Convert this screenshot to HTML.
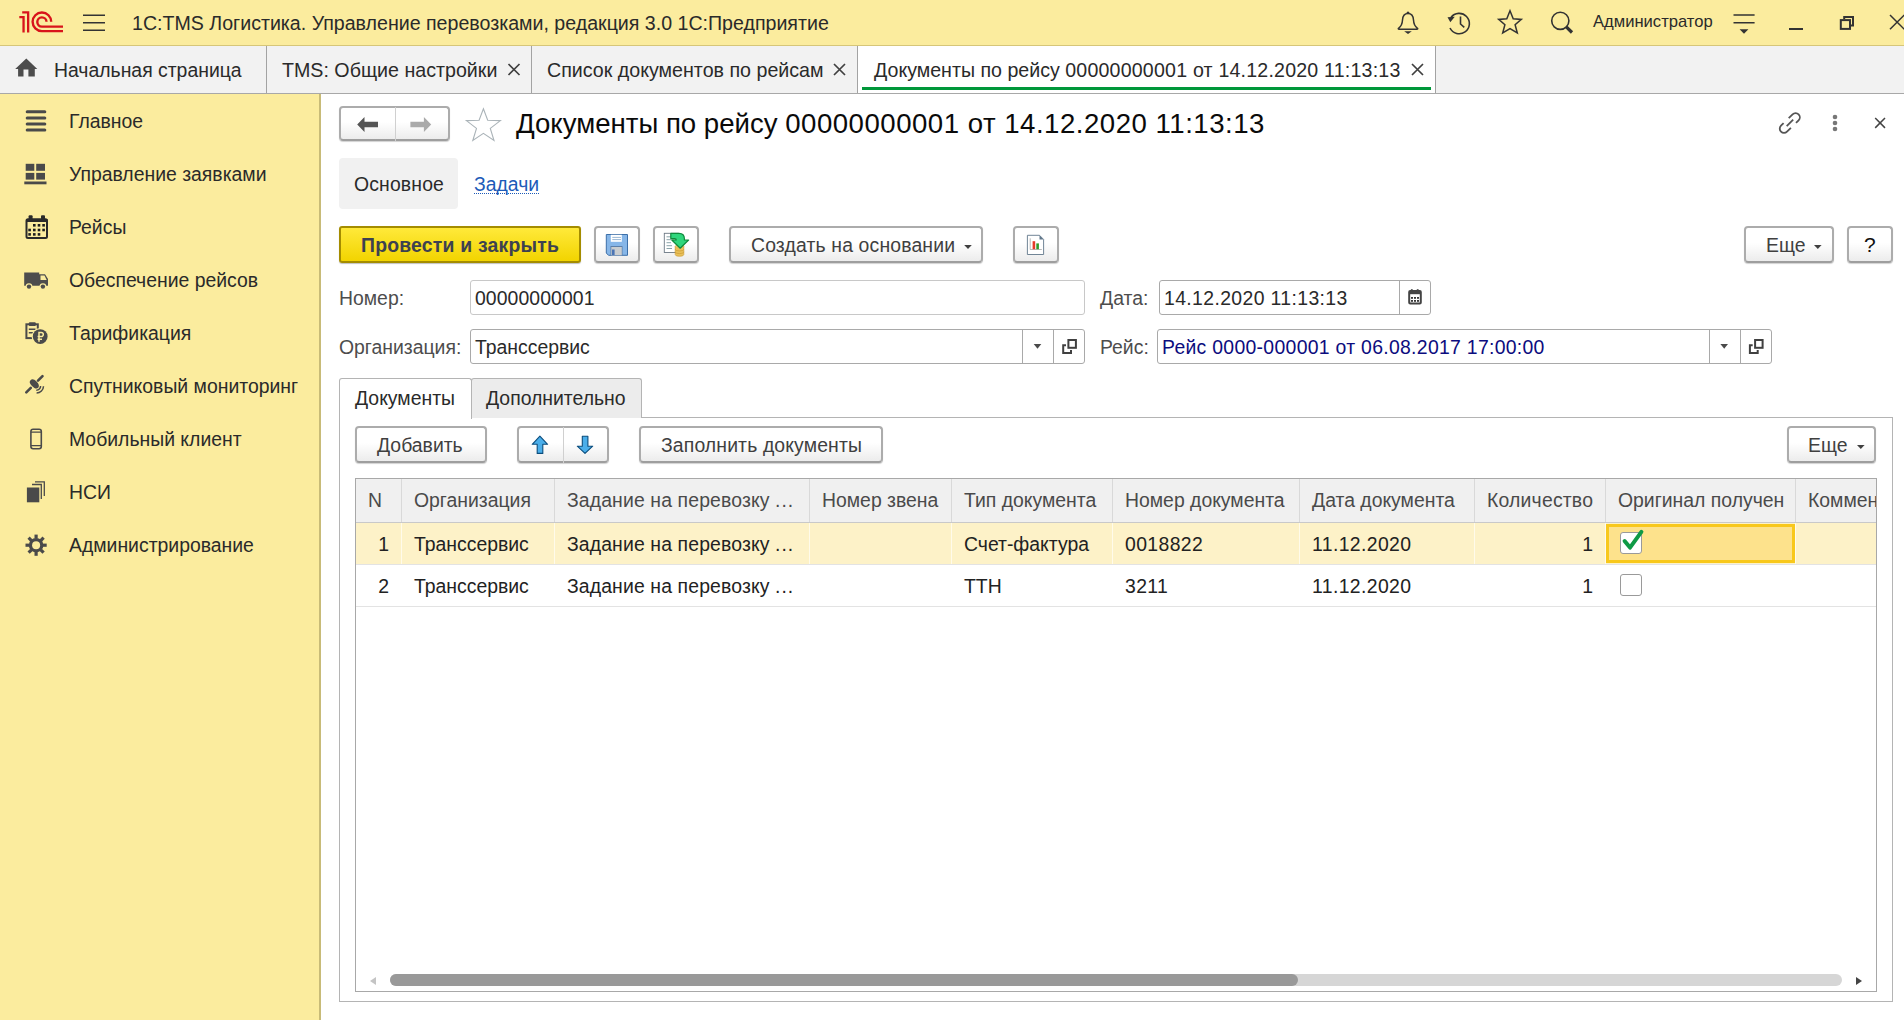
<!DOCTYPE html>
<html><head><meta charset="utf-8">
<style>
*{margin:0;padding:0;box-sizing:border-box}
html,body{width:1904px;height:1020px;overflow:hidden;background:#fff;font-family:"Liberation Sans",sans-serif;color:#2a2a2a;font-size:19.4px}
.a{position:absolute}
.t{position:absolute;white-space:nowrap;line-height:20px;height:20px}
#top{left:0;top:0;width:1904px;height:46px;background:#fbec9e;border-bottom:1px solid #d6c679}
#tabs{left:0;top:46px;width:1904px;height:48px;background:#f2f2f2;border-bottom:1px solid #a8a8a8}
#side{left:0;top:94px;width:321px;height:926px;background:#fbec9e;border-right:2px solid #c8bb78}
.sep{position:absolute;top:46px;width:1px;height:47px;background:#a3a3a3}
.btn{position:absolute;border:2px solid #acacac;border-bottom-color:#9e9e9e;border-radius:4px;background:linear-gradient(#fff 0%,#fff 45%,#ececec 100%);box-shadow:0 1px 1px rgba(0,0,0,.18)}
.fld{position:absolute;border:1px solid #a9a9a9;border-radius:3px;background:#fff}
.lbl{color:#4d4d4d}
.hd{position:absolute;top:479px;height:43px;background:#f2f2f2}
.vl{position:absolute;width:1px;background:#dcdcdc}
.dg{letter-spacing:0.38px}
</style></head><body>
<!-- top bar -->
<div id="top" class="a"></div>
<div id="tabs" class="a"></div>
<div id="side" class="a"></div>


<!-- title -->
<div class="t" style="left:132px;top:13px;font-size:19.6px">1С:TMS Логистика. Управление перевозками, редакция 3.0 1С:Предприятие</div>
<div class="t" style="left:1593px;top:12px;font-size:16.6px">Администратор</div>
<!-- tabs -->
<div class="sep" style="left:266px"></div>
<div class="sep" style="left:531px"></div>
<div class="sep" style="left:857px"></div>
<div class="a" style="left:858px;top:46px;width:577px;height:47px;background:#fff"></div>
<div class="sep" style="left:1435px"></div>
<div class="a" style="left:862px;top:87px;width:569px;height:3px;background:#00973a"></div>
<div class="t" style="left:54px;top:60px">Начальная страница</div>
<div class="t" style="left:282px;top:60px;font-size:19.65px">TMS: Общие настройки</div>
<div class="t" style="left:547px;top:60px;font-size:19.65px">Список документов по рейсам</div>
<div class="t" style="left:874px;top:60px;font-size:19.6px">Документы по рейсу <span style="letter-spacing:0.2px">00000000001 от 14.12.2020 11:13:13</span></div>
<!-- sidebar -->
<div class="t" style="left:69px;top:111px">Главное</div>
<div class="t" style="left:69px;top:164px">Управление заявками</div>
<div class="t" style="left:69px;top:217px">Рейсы</div>
<div class="t" style="left:69px;top:270px">Обеспечение рейсов</div>
<div class="t" style="left:69px;top:323px">Тарификация</div>
<div class="t" style="left:69px;top:376px">Спутниковый мониторинг</div>
<div class="t" style="left:69px;top:429px">Мобильный клиент</div>
<div class="t" style="left:69px;top:482px">НСИ</div>
<div class="t" style="left:69px;top:535px">Администрирование</div>
<!-- form header -->
<div class="btn" style="left:339px;top:106px;width:111px;height:35px"></div>
<div class="a" style="left:395px;top:107px;width:1px;height:34px;background:#d0d0d0"></div>
<div class="t" style="left:516px;top:114px;font-size:27.6px;color:#0a0a0a">Документы по рейсу <span style="letter-spacing:0.5px">00000000001 от 14.12.2020 11:13:13</span></div>
<div class="a" style="left:339px;top:158px;width:119px;height:51px;background:#f1f1f1;border-radius:4px"></div>
<div class="t" style="left:354px;top:174px;letter-spacing:0.15px">Основное</div>
<div class="t" style="left:474px;top:174px;color:#1c5ab8">Задачи</div>
<div class="a" style="left:474px;top:193px;width:65px;height:0;border-top:1px dotted #1c5ab8"></div>
<!-- command bar -->
<div class="a" style="left:339px;top:226px;width:242px;height:37px;border:2px solid #a48c00;border-radius:3px;background:linear-gradient(#ffe93a,#f2d400);box-shadow:0 1px 1px rgba(0,0,0,.25)"></div>
<div class="t" style="left:361px;top:235px;font-weight:bold;color:#3d4150;letter-spacing:0.2px">Провести и закрыть</div>
<div class="btn" style="left:594px;top:226px;width:46px;height:37px"></div>
<div class="btn" style="left:653px;top:226px;width:46px;height:37px"></div>
<div class="btn" style="left:729px;top:226px;width:254px;height:37px"></div>
<div class="t" style="left:751px;top:235px;color:#404040;letter-spacing:0.15px">Создать на основании</div>
<div class="btn" style="left:1013px;top:226px;width:46px;height:37px"></div>
<div class="btn" style="left:1744px;top:226px;width:90px;height:37px"></div>
<div class="t" style="left:1766px;top:235px;color:#404040">Еще</div>
<div class="btn" style="left:1847px;top:226px;width:46px;height:37px"></div>
<div class="t" style="left:1864px;top:235px;color:#111;font-size:21px">?</div>
<!-- fields -->
<div class="t lbl" style="left:339px;top:288px">Номер:</div>
<div class="fld" style="left:470px;top:280px;width:615px;height:35px;border-color:#c8c8c8"></div>
<div class="t" style="left:475px;top:288px;letter-spacing:0.08px">00000000001</div>
<div class="t lbl" style="left:1100px;top:288px">Дата:</div>
<div class="fld" style="left:1159px;top:280px;width:272px;height:35px"></div>
<div class="a" style="left:1399px;top:281px;width:1px;height:33px;background:#a9a9a9"></div>
<div class="t dg" style="left:1164px;top:288px">14.12.2020 11:13:13</div>
<div class="t lbl" style="left:339px;top:337px">Организация:</div>
<div class="fld" style="left:470px;top:329px;width:615px;height:35px"></div>
<div class="a" style="left:1022px;top:330px;width:1px;height:33px;background:#a9a9a9"></div>
<div class="a" style="left:1053px;top:330px;width:1px;height:33px;background:#a9a9a9"></div>
<div class="t" style="left:475px;top:337px">Транссервис</div>
<div class="t lbl" style="left:1100px;top:337px">Рейс:</div>
<div class="fld" style="left:1157px;top:329px;width:615px;height:35px"></div>
<div class="a" style="left:1709px;top:330px;width:1px;height:33px;background:#a9a9a9"></div>
<div class="a" style="left:1740px;top:330px;width:1px;height:33px;background:#a9a9a9"></div>
<div class="t" style="left:1162px;top:337px;color:#0c0c7e;letter-spacing:0.3px">Рейс 0000-000001 от 06.08.2017 17:00:00</div>
<!-- tabs (page) -->
<div class="a" style="left:339px;top:417px;width:1554px;height:585px;border:1px solid #b4b4b4"></div>
<div class="a" style="left:471px;top:378px;width:171px;height:40px;background:#ececec;border:1px solid #b4b4b4;border-bottom:none;border-radius:3px 3px 0 0"></div>
<div class="a" style="left:339px;top:378px;width:133px;height:41px;background:#fff;border:1px solid #b4b4b4;border-bottom:none;border-radius:3px 3px 0 0"></div>
<div class="t" style="left:355px;top:388px">Документы</div>
<div class="t" style="left:486px;top:388px">Дополнительно</div>
<!-- table toolbar -->
<div class="btn" style="left:355px;top:426px;width:132px;height:37px"></div>
<div class="t" style="left:377px;top:435px;color:#404040">Добавить</div>
<div class="btn" style="left:517px;top:426px;width:92px;height:37px"></div>
<div class="a" style="left:563px;top:427px;width:1px;height:36px;background:#d0d0d0"></div>
<div class="btn" style="left:639px;top:426px;width:244px;height:37px"></div>
<div class="t" style="left:661px;top:435px;color:#404040;letter-spacing:0.13px">Заполнить документы</div>
<div class="btn" style="left:1787px;top:426px;width:89px;height:37px"></div>
<div class="t" style="left:1808px;top:435px;color:#404040">Еще</div>
<!-- table -->
<div class="a" style="left:355px;top:478px;width:1522px;height:514px;border:1px solid #a8a8a8;overflow:hidden" id="tbl">
<div class="a" style="left:0px;top:0px;width:1520px;height:43px;background:#f0f0f0"></div>
<div class="a" style="left:0px;top:43px;width:1520px;height:1px;background:#c9c9c9"></div>
<div class="a" style="left:45px;top:0px;width:1px;height:43px;background:#d9d9d9"></div>
<div class="a" style="left:198px;top:0px;width:1px;height:43px;background:#d9d9d9"></div>
<div class="a" style="left:453px;top:0px;width:1px;height:43px;background:#d9d9d9"></div>
<div class="a" style="left:595px;top:0px;width:1px;height:43px;background:#d9d9d9"></div>
<div class="a" style="left:756px;top:0px;width:1px;height:43px;background:#d9d9d9"></div>
<div class="a" style="left:943px;top:0px;width:1px;height:43px;background:#d9d9d9"></div>
<div class="a" style="left:1118px;top:0px;width:1px;height:43px;background:#d9d9d9"></div>
<div class="a" style="left:1249px;top:0px;width:1px;height:43px;background:#d9d9d9"></div>
<div class="a" style="left:1439px;top:0px;width:1px;height:43px;background:#d9d9d9"></div>
<div class="a" style="left:0px;top:44px;width:1520px;height:41px;background:#fdf2c8"></div>
<div class="a" style="left:45px;top:44px;width:1px;height:41px;background:#fffbea"></div>
<div class="a" style="left:198px;top:44px;width:1px;height:41px;background:#fffbea"></div>
<div class="a" style="left:453px;top:44px;width:1px;height:41px;background:#fffbea"></div>
<div class="a" style="left:595px;top:44px;width:1px;height:41px;background:#fffbea"></div>
<div class="a" style="left:756px;top:44px;width:1px;height:41px;background:#fffbea"></div>
<div class="a" style="left:943px;top:44px;width:1px;height:41px;background:#fffbea"></div>
<div class="a" style="left:1118px;top:44px;width:1px;height:41px;background:#fffbea"></div>
<div class="a" style="left:1249px;top:44px;width:1px;height:41px;background:#fffbea"></div>
<div class="a" style="left:1439px;top:44px;width:1px;height:41px;background:#fffbea"></div>
<div class="a" style="left:0px;top:85px;width:1520px;height:1px;background:#e3e3e3"></div>
<div class="a" style="left:0px;top:127px;width:1520px;height:1px;background:#e3e3e3"></div>
<div class="a" style="left:1250px;top:45px;width:189px;height:39px;background:#fde28c;border:3px solid #f8c81c"></div>
<div class="t" style="left:12px;top:11px;color:#4a4a4a">N</div>
<div class="t" style="left:58px;top:11px;color:#4a4a4a">Организация</div>
<div class="t" style="left:211px;top:11px;color:#4a4a4a"><span style="letter-spacing:0.13px">Задание на перевозку </span><span style="letter-spacing:1px">...</span></div>
<div class="t" style="left:466px;top:11px;color:#4a4a4a">Номер звена</div>
<div class="t" style="left:608px;top:11px;color:#4a4a4a">Тип документа</div>
<div class="t" style="left:769px;top:11px;color:#4a4a4a">Номер документа</div>
<div class="t" style="left:956px;top:11px;color:#4a4a4a">Дата документа</div>
<div class="t" style="left:1131px;top:11px;color:#4a4a4a;letter-spacing:0.2px">Количество</div>
<div class="t" style="left:1262px;top:11px;color:#4a4a4a">Оригинал получен</div>
<div class="t" style="left:1452px;top:11px;color:#4a4a4a">Комментарий</div>
<div class="t" style="left:0px;width:33px;text-align:right;top:55px;color:#222">1</div>
<div class="t" style="left:58px;top:55px;color:#222">Транссервис</div>
<div class="t" style="left:211px;top:55px;color:#222"><span style="letter-spacing:0.13px">Задание на перевозку </span><span style="letter-spacing:1px">...</span></div>
<div class="t" style="left:608px;top:55px;color:#222">Счет-фактура</div>
<div class="t" style="left:769px;top:55px;color:#222"><span class="dg">0018822</span></div>
<div class="t" style="left:956px;top:55px;color:#222"><span class="dg">11.12.2020</span></div>
<div class="t" style="left:1119px;width:118px;text-align:right;top:55px;color:#222">1</div>
<div class="t" style="left:0px;width:33px;text-align:right;top:97px;color:#222">2</div>
<div class="t" style="left:58px;top:97px;color:#222">Транссервис</div>
<div class="t" style="left:211px;top:97px;color:#222"><span style="letter-spacing:0.13px">Задание на перевозку </span><span style="letter-spacing:1px">...</span></div>
<div class="t" style="left:608px;top:97px;color:#222">ТТН</div>
<div class="t" style="left:769px;top:97px;color:#222"><span class="dg">3211</span></div>
<div class="t" style="left:956px;top:97px;color:#222"><span class="dg">11.12.2020</span></div>
<div class="t" style="left:1119px;width:118px;text-align:right;top:97px;color:#222">1</div>
<div class="a" style="left:1264px;top:53px;width:22px;height:22px;background:#fff;border:1px solid #9a9a9a;border-radius:3px"></div>
<div class="a" style="left:1264px;top:95px;width:22px;height:22px;background:#fff;border:1px solid #9a9a9a;border-radius:3px"></div>
<svg class="a" style="left:1264px;top:47px" width="30" height="30" viewBox="1620 526 30 30"><polyline points="1624.6,541 1630,547.6 1641.4,531.8" fill="none" stroke="#0f9a45" stroke-width="4" stroke-linecap="round" stroke-linejoin="round"/></svg>
<div class="a" style="left:14px;top:498px;width:7px;height:8px;"></div>
<svg class="a" style="left:12px;top:496px" width="10" height="12"><polygon points="8,2 8,10 2,6" fill="#c4c4c4"/></svg>
<div class="a" style="left:34px;top:495px;width:1452px;height:12px;background:#d6d6d6;border-radius:6px"></div>
<div class="a" style="left:34px;top:495px;width:908px;height:12px;background:#999;border-radius:6px"></div>
<svg class="a" style="left:1498px;top:496px" width="10" height="12"><polygon points="2,2 2,10 8,6" fill="#444"/></svg>
</div>


<svg class="a" style="left:0;top:0" width="1904" height="1020" viewBox="0 0 1904 1020">
<!-- 1C logo -->
<g fill="#d8141b">
<path d="M19.3 16 H24.7 V32.4 H22.4 V18.2 H19.3 Z"/>
<path d="M22.2 11.2 H29.3 V32.4 H27 V13.4 H22.2 Z"/>
</g>
<g fill="none" stroke="#d8141b" stroke-width="2.4">
<path d="M51.2 21.8 A9.3 9.3 0 1 0 41.9 31.1 H63"/>
<path d="M46.5 21.8 A4.6 4.6 0 1 0 41.9 26.6 H63"/>
</g>
<!-- hamburger -->
<g stroke="#333" stroke-width="1.6">
<path d="M83 15.2 H105 M83 22.7 H105 M83 30.2 H105"/>
</g>
<!-- bell -->
<g fill="none" stroke="#333" stroke-width="1.5" stroke-linejoin="round">
<path d="M1408 13.5 C1404 13.5 1402.7 16.5 1402.5 20 C1402.3 24.5 1401 26.5 1398.5 28.3 C1398 28.8 1398.3 29.2 1399 29.2 H1417 C1417.7 29.2 1418 28.8 1417.5 28.3 C1415 26.5 1413.7 24.5 1413.5 20 C1413.3 16.5 1412 13.5 1408 13.5 Z"/>
</g>
<path d="M1406.5 13 A1.5 1.5 0 1 1 1409.5 13 Z" fill="#333"/>
<path d="M1404.2 31.2 H1411.8 L1408 34 Z" fill="#333"/>
<!-- history -->
<g fill="none" stroke="#333" stroke-width="1.6">
<path d="M1450 28 A10.2 10.2 0 1 0 1451 17.5"/>
<path d="M1460.5 16.5 V24 L1464.3 27.3"/>
</g>
<path d="M1447.5 17.3 L1454.8 16.8 L1450.3 22.3 Z" fill="#333"/>
<!-- star -->
<path d="M1510 10.8 L1513.2 18.8 L1521.3 19.4 L1515.1 24.7 L1517.3 33 L1510 28.6 L1502.7 33 L1504.9 24.7 L1498.7 19.4 L1506.8 18.8 Z" fill="none" stroke="#333" stroke-width="1.5" stroke-linejoin="miter"/>
<!-- search -->
<circle cx="1560.3" cy="20.8" r="8.6" fill="none" stroke="#333" stroke-width="1.6"/>
<path d="M1566.3 26.8 L1572 32.5" stroke="#333" stroke-width="3.2"/>
<!-- filter -->
<path d="M1733.5 14.9 H1754.6 M1733.5 22.7 H1754.6" stroke="#333" stroke-width="1.5"/>
<path d="M1739.6 29.2 H1748.4 L1744 33.7 Z" fill="#333"/>
<!-- minimize -->
<rect x="1789" y="28" width="14" height="2" fill="#333"/>
<!-- restore -->
<path d="M1844.2 19 V17.1 H1853 V25.6 H1851" fill="none" stroke="#333" stroke-width="2"/>
<rect x="1840.8" y="20.1" width="9.2" height="8.8" fill="none" stroke="#333" stroke-width="2"/>
<!-- close window -->
<path d="M1890 15 L1904.3 29.3 M1890 29.3 L1904.3 15" stroke="#333" stroke-width="1.5"/>
<!-- home -->
<path d="M26.3 58.5 L37.3 69.1 H34.8 V76.5 H28.4 V69.6 H23.5 V76.5 H18.1 V69.1 H15.2 Z" fill="#4d4d4d"/>
<!-- tab close x -->
<g stroke="#404040" stroke-width="1.7">
<path d="M508.5 64 L519.5 75 M508.5 75 L519.5 64"/>
<path d="M834 64 L845 75 M834 75 L845 64"/>
<path d="M1412 64 L1423 75 M1412 75 L1423 64"/>
</g>
<!-- sidebar icons -->
<g fill="#4a4a4a">
<rect x="25.7" y="110.3" width="20.6" height="3" rx="1.5"/>
<rect x="25.7" y="116.4" width="20.6" height="3" rx="1.5"/>
<rect x="25.7" y="122.5" width="20.6" height="3" rx="1.5"/>
<rect x="25.7" y="128.5" width="20.6" height="3" rx="1.5"/>
<rect x="25.7" y="163.8" width="8.6" height="7" />
<rect x="36.2" y="163.8" width="8.8" height="7" />
<rect x="25.7" y="172.9" width="8.6" height="6.7" />
<rect x="36.2" y="172.9" width="8.8" height="6.7" />
<rect x="24.3" y="181.5" width="22.2" height="2.8" />
</g>
<!-- calendar sidebar -->
<rect x="26.5" y="219.2" width="20.5" height="18.8" rx="1.5" fill="none" stroke="#2a2a2a" stroke-width="2"/>
<rect x="26" y="219" width="21.5" height="3" fill="#2a2a2a"/>
<rect x="28.6" y="215.2" width="4" height="4.4" rx="1" fill="#2a2a2a"/>
<rect x="41" y="215.2" width="4" height="4.4" rx="1" fill="#2a2a2a"/>
<g fill="#1e1e1e">
<rect x="33" y="224" width="2.6" height="2.6"/><rect x="37.7" y="224" width="2.6" height="2.6"/><rect x="42.3" y="224" width="2.6" height="2.6"/>
<rect x="28.3" y="228.7" width="2.6" height="2.6"/><rect x="33" y="228.7" width="2.6" height="2.6"/><rect x="37.7" y="228.7" width="2.6" height="2.6"/><rect x="42.3" y="228.7" width="2.6" height="2.6"/>
<rect x="28.3" y="233.1" width="2.6" height="2.6"/><rect x="33" y="233.1" width="2.6" height="2.6"/><rect x="37.7" y="233.1" width="2.6" height="2.6"/>
</g>
<!-- truck -->
<path d="M24.2 272.5 H39.2 V274.3 H45 L48 279 V285.8 H24.2 Z" fill="#4d4d4d"/>
<path d="M40.5 275.6 H44.5 L46.7 280 H40.5 Z" fill="#fbec9e"/>
<circle cx="29" cy="286.6" r="3.4" fill="#fbec9e"/><circle cx="42.9" cy="286.6" r="3.4" fill="#fbec9e"/>
<circle cx="29" cy="286.6" r="2.2" fill="#4d4d4d"/><circle cx="42.9" cy="286.6" r="2.2" fill="#4d4d4d"/>
<!-- tarif -->
<rect x="26.4" y="324.3" width="11.4" height="13.8" fill="none" stroke="#4a4a4a" stroke-width="2"/>
<rect x="28.8" y="322.3" width="7" height="3.6" rx="1" fill="#4a4a4a"/>
<path d="M28.8 329.2 H35.5 M28.8 332.8 H35.5" stroke="#4a4a4a" stroke-width="1.6"/>
<circle cx="40.2" cy="336.6" r="8.6" fill="#fbec9e"/>
<circle cx="40.2" cy="336.6" r="7.4" fill="#4a4a4a"/>
<path d="M39 341.8 V332.4 H41.2 A2.1 2.1 0 0 1 41.2 336.6 H37.6 M37.6 339.2 H42" fill="none" stroke="#fbec9e" stroke-width="1.5"/>
<!-- satellite -->
<path d="M26.3 392.3 L30.8 387.8 M38 380.6 L42.5 376.1" stroke="#4a4a4a" stroke-width="2.6" stroke-linecap="round"/>
<path d="M30.5 380.2 C32 378.6 34 379 36.5 381.5 C39 384 39.6 386.2 38.2 387.8 C36.8 389.3 34.5 388.6 32 386 C29.6 383.6 29 381.7 30.5 380.2 Z" fill="#4a4a4a"/>
<path d="M36.3 390.2 A4.2 4.2 0 0 0 40.6 385.9 M36.6 393 A7 7 0 0 0 43.5 386.2" fill="none" stroke="#4a4a4a" stroke-width="1.5"/>
<!-- phone -->
<rect x="30.9" y="429.3" width="10.4" height="19.4" rx="2.2" fill="none" stroke="#4a4a4a" stroke-width="1.6"/>
<path d="M31 432.2 H41.2 M31 445.6 H41.2" stroke="#4a4a4a" stroke-width="1.3"/>
<!-- nsi -->
<path d="M32 484.5 H41.3 V499" fill="none" stroke="#4a4a4a" stroke-width="1.3"/>
<path d="M35 481.8 H44.3 V496" fill="none" stroke="#4a4a4a" stroke-width="1.3"/>
<rect x="26.9" y="487.5" width="12.4" height="14.8" fill="#4a4a4a"/>
<!-- gear -->
<g transform="translate(36.1 545.2)" fill="#4a4a4a">
<circle r="7.3"/>
<g id="teeth"><rect x="-1.6" y="-10.6" width="3.2" height="4"/><rect x="-1.6" y="6.6" width="3.2" height="4"/><rect x="-10.6" y="-1.6" width="4" height="3.2"/><rect x="6.6" y="-1.6" width="4" height="3.2"/></g>
<g transform="rotate(45)"><rect x="-1.6" y="-10.6" width="3.2" height="4"/><rect x="-1.6" y="6.6" width="3.2" height="4"/><rect x="-10.6" y="-1.6" width="4" height="3.2"/><rect x="6.6" y="-1.6" width="4" height="3.2"/></g>
<circle r="4" fill="#fbec9e"/>
</g>
<!-- nav arrows -->
<path d="M357.2 124.5 L364.5 117 V121.8 H378 V127.2 H364.5 V132 Z" fill="#555"/>
<path d="M431.2 124.5 L423.9 117 V121.8 H410.4 V127.2 H423.9 V132 Z" fill="#aaa"/>
<!-- fav star -->
<path d="M483.4 108.8 L487.7 120.3 L500.4 120.6 L490.3 128.4 L494 140.5 L483.4 133.4 L472.8 140.5 L476.5 128.4 L466.4 120.6 L479.1 120.3 Z" fill="none" stroke="#aab3b8" stroke-width="1.1"/>
<!-- form link/kebab/close -->
<g fill="none" stroke="#555" stroke-width="1.8">
<path d="M1788.7 118.2 L1792.6 114.3 A4.2 4.2 0 0 1 1798.6 120.3 L1796 122.9"/>
<path d="M1790.9 127.8 L1787 131.7 A4.2 4.2 0 0 1 1781 125.7 L1783.6 123.1"/>
<path d="M1786.7 126.2 L1793.2 119.7"/>
</g>
<circle cx="1835" cy="117" r="2.3" fill="#777"/><circle cx="1835" cy="123" r="2.3" fill="#777"/><circle cx="1835" cy="129" r="2.3" fill="#777"/>
<path d="M1875.2 118 L1885 127.9 M1875.2 127.9 L1885 118" stroke="#444" stroke-width="1.5"/>
<!-- dropdown arrows in buttons -->
<path d="M964.2 245 H971.8 L968 249 Z" fill="#404040"/>
<path d="M1814 245 H1821.6 L1817.8 249 Z" fill="#404040"/>
<path d="M1857 445 H1864.6 L1860.8 449 Z" fill="#404040"/>
<!-- field icons -->
<path d="M1033.7 344 H1041.3 L1037.5 348.8 Z" fill="#4a4a4a"/>
<path d="M1720.4 344 H1728 L1724.2 348.8 Z" fill="#4a4a4a"/>
<g fill="none" stroke="#404040" stroke-width="2">
<rect x="1068.4" y="340" width="7.5" height="7.8"/>
<path d="M1066 345.3 H1063.2 V353 H1071 V350"/>
<rect x="1755.1" y="340" width="7.5" height="7.8"/>
<path d="M1752.7 345.3 H1749.9 V353 H1757.7 V350"/>
</g>
<!-- date calendar -->
<rect x="1409.2" y="291" width="11.6" height="12.6" rx="1" fill="none" stroke="#444" stroke-width="2"/>
<rect x="1409" y="291" width="12" height="3.2" fill="#444"/>
<rect x="1410.9" y="289.2" width="1.8" height="3" fill="#444"/><rect x="1416.8" y="289.2" width="1.8" height="3" fill="#444"/>
<g fill="#222"><rect x="1411.1" y="297" width="1.8" height="1.8"/><rect x="1414.1" y="297" width="1.8" height="1.8"/><rect x="1417.1" y="297" width="1.8" height="1.8"/>
<rect x="1411.1" y="300" width="1.8" height="1.8"/><rect x="1414.1" y="300" width="1.8" height="1.8"/><rect x="1417.1" y="300" width="1.8" height="1.8"/></g>
<!-- up/down arrows -->
<path d="M539.9 436.2 L547.6 444.3 H542.8 V453.4 H537.2 V444.3 H532.2 Z" fill="#4aaeea" stroke="#0b4d7d" stroke-width="1.1" stroke-linejoin="round"/>
<path d="M585 453.4 L592.7 446.2 H587.9 V436.2 H582.3 V446.2 H577.3 Z" fill="#4aaeea" stroke="#0b4d7d" stroke-width="1.1" stroke-linejoin="round"/>
<!-- floppy -->
<path d="M606.3 234.5 H627.5 V255.3 H608.5 L606.3 253 Z" fill="#86b6e8" stroke="#3c6fa8" stroke-width="1"/>
<rect x="610.8" y="234.8" width="11" height="7" fill="#fff"/>
<path d="M612.3 237.4 H621 M612.3 239.6 H621" stroke="#7fa4c9" stroke-width="0.8"/>
<rect x="610.5" y="246" width="12" height="9.3" fill="#5d7fa8"/>
<rect x="611.3" y="247" width="10.5" height="8.3" fill="#c9cdd0"/>
<rect x="612" y="249.5" width="2.6" height="5.5" fill="#4a74b5"/>
<!-- doc with arrow -->
<rect x="664.3" y="233.3" width="14" height="19.2" fill="#fff" stroke="#6c7884" stroke-width="0.9"/>
<path d="M666.5 236.8 H671 M666.5 239.7 H671 M666.5 242.7 H671 M666.5 245.7 H672 M666.5 248.5 H672" stroke="#7e9aa0" stroke-width="0.9"/>
<ellipse cx="679.5" cy="246.5" rx="4.3" ry="1.8" fill="#f5d98a" stroke="#c8952b" stroke-width="0.6"/>
<path d="M675.2 246.5 V254.5 A4.3 1.8 0 0 0 683.8 254.5 V246.5" fill="#e9c05a" stroke="#c8952b" stroke-width="0.6"/>
<path d="M675.2 249.2 A4.3 1.8 0 0 0 683.8 249.2 M675.2 251.8 A4.3 1.8 0 0 0 683.8 251.8" fill="none" stroke="#c8952b" stroke-width="0.6"/>
<path d="M670.8 233.4 H679 Q684.4 233.4 684.4 238.8 V240 H688.6 L680.2 248.2 L671.8 240 H676.2 V239.6 Q676.2 238.6 675 238.6 H670.8 Z" fill="#2fd67c" stroke="#0f8a3c" stroke-width="1.2" stroke-linejoin="round"/>
<!-- report icon -->
<path d="M1027.4 235.3 H1039.5 L1043.6 239.4 V254.5 H1027.4 Z" fill="#fff" stroke="#61778a" stroke-width="0.9"/>
<path d="M1039.5 235.3 V239.4 H1043.6 Z" fill="#61778a"/>
<path d="M1030.2 238.3 V249.5 H1041.8" fill="none" stroke="#888" stroke-width="0.6"/>
<rect x="1032.6" y="241.2" width="2.6" height="8" fill="#e53a2a"/>
<rect x="1036.3" y="243.4" width="2.6" height="5.8" fill="#2e9a2a"/>
</svg>

</body></html>
